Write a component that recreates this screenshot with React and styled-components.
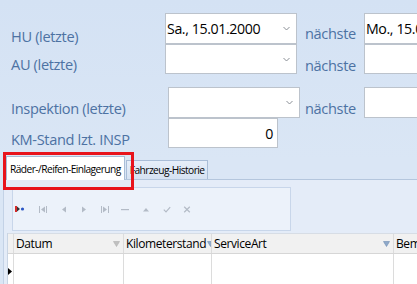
import React from 'react';
import styled, { createGlobalStyle } from 'styled-components';

const Global = createGlobalStyle`
  html, body { margin: 0; padding: 0; background: #d7e4f4; overflow: hidden; }
  #root { width: 417px; height: 284px; }
`;

const FONT = `"Open Sans", "Noto Sans", sans-serif`;

const Page = styled.div`
  position: relative;
  width: 417px;
  height: 284px;
  overflow: hidden;
  background: linear-gradient(#d4e2f4, #dae6f5 160px);
  font-family: ${FONT};
  display: flex;
  flex-direction: column;
`;

const Form = styled.div`
  flex-shrink: 0;
  padding: 13px 0 0 11px;
  display: flex;
  flex-direction: column;
`;

const FormRow = styled.div`
  display: grid;
  grid-template-columns: 154px 140px 59px 140px;
  height: ${(p) => p.$h}px;
  margin-top: ${(p) => p.$mt || 0}px;
`;

const Label = styled.div`
  font-size: 14.6px;
  line-height: 18px;
  letter-spacing: -0.35px;
  color: #4d72a3;
  padding-top: ${(p) => p.$pt}px;
  white-space: nowrap;
`;

const Field = styled.div`
  box-sizing: border-box;
  width: ${(p) => p.$w || 132}px;
  height: ${(p) => p.$h}px;
  margin-left: ${(p) => p.$ml || 0}px;
  background: #fff;
  border: 1px solid #bcc3cc;
  display: flex;
  align-items: center;
  justify-content: ${(p) => (p.$right ? 'flex-end' : 'space-between')};
  padding: 0 ${(p) => (p.$right ? 4 : 6)}px 0 1px;
  font-size: 14.2px;
  letter-spacing: -0.4px;
  color: #000;
  white-space: nowrap;
  overflow: hidden;
`;

const Chevron = () => (
  <svg width="7" height="5" viewBox="0 0 7 5">
    <path d="M0.5 1 L3.5 4 L6.5 1" fill="none" stroke="#8a8f96" strokeWidth="1" />
  </svg>
);

const TabStrip = styled.div`
  flex-shrink: 0;
  display: flex;
  align-items: flex-end;
  height: 31px;
  padding-left: 6px;
  position: relative;
  z-index: 1;
`;

const Tab = styled.div`
  box-sizing: border-box;
  height: ${(p) => (p.$active ? 24 : 19)}px;
  margin-bottom: ${(p) => (p.$active ? -1 : 0)}px;
  padding: 0 3px;
  background: ${(p) => (p.$active ? '#ffffff' : 'linear-gradient(#e6eef9, #d6e2f2)')};
  border: 1px solid #a9bdd7;
  border-bottom: none;
  margin-left: ${(p) => (p.$active ? 0 : 1)}px;
  display: flex;
  align-items: center;
  font-size: 10.2px;
  letter-spacing: -0.55px;
  color: #000;
  white-space: nowrap;
`;

const Content = styled.div`
  flex: 1;
  min-height: 0;
  overflow: hidden;
  margin-left: 3px;
  background: #e4ecf8;
  border-top: 1px solid #b4c6dd;
  border-left: 1px solid #c3d2e6;
  padding: 7px 0 0 8px;
  display: flex;
  flex-direction: column;
`;

const NavBox = styled.div`
  flex-shrink: 0;
  box-sizing: border-box;
  width: 279px;
  height: 44px;
  border: 1px solid #c8d6ea;
  background: #ecf2fa;
  display: flex;
  align-items: center;
`;

const NavBtn = styled.div`
  width: ${(p) => p.$w || 20.6}px;
  margin-right: ${(p) => p.$mr || 0}px;
  display: flex;
  justify-content: center;
  align-items: center;
  height: 12px;
`;

const Grid = styled.div`
  flex-shrink: 0;
  margin-top: 2px;
  margin-left: -5px;
  background: #fff;
  border-left: 1px solid #c9d5e4;
  display: flex;
  flex-direction: column;
`;

const GridRow = styled.div`
  display: grid;
  grid-template-columns: 6px 110px 88px 182px 100px;
  height: ${(p) => p.$h}px;
  background: ${(p) => (p.$header ? '#f1f1f1' : '#ffffff')};
  border-top: ${(p) => (p.$header ? '1px solid #d7dde5' : 'none')};
  border-bottom: ${(p) => (p.$header ? '1px solid #d6d6d6' : 'none')};
`;

const Cell = styled.div`
  border-right: 1px solid #dcdcdc;
  display: flex;
  align-items: center;
  justify-content: space-between;
  gap: 1px;
  padding: 0 ${(p) => (p.$pad ? 3 : 0)}px 0 ${(p) => (p.$pad ? 2 : 0)}px;
  font-size: 12px;
  letter-spacing: -0.4px;
  color: #000;
  white-space: nowrap;
  overflow: hidden;
`;

const Annotation = styled.div`
  position: absolute;
  left: 3px;
  top: 152px;
  width: 131px;
  height: 38px;
  box-sizing: border-box;
  border: 3px solid #e8141c;
  pointer-events: none;
  z-index: 5;
`;

const G = '#b3bbc6';

const icons = [
  <svg width="10" height="8" viewBox="0 0 10 8" key="a">
    <rect x="0" y="1" width="2" height="6" fill="#d42a2a" />
    <path d="M2 1.5 L5 4 L2 6.5 Z" fill="#333" />
    <circle cx="7.5" cy="4" r="1.6" fill="#2a55c4" />
  </svg>,
  <svg width="8" height="7" viewBox="0 0 8 7" key="b">
    <rect x="0" y="0" width="1" height="7" fill={G} />
    <path d="M6 0.5 L2 3.5 L6 6.5 Z" fill={G} />
    <rect x="7" y="0" width="1" height="7" fill={G} />
  </svg>,
  <svg width="6" height="7" viewBox="0 0 6 7" key="c">
    <path d="M5 0.5 L1 3.5 L5 6.5 Z" fill={G} />
  </svg>,
  <svg width="6" height="7" viewBox="0 0 6 7" key="d">
    <path d="M1 0.5 L5 3.5 L1 6.5 Z" fill={G} />
  </svg>,
  <svg width="8" height="7" viewBox="0 0 8 7" key="e">
    <rect x="0" y="0" width="1" height="7" fill={G} />
    <path d="M2 0.5 L6 3.5 L2 6.5 Z" fill={G} />
    <rect x="7" y="0" width="1" height="7" fill={G} />
  </svg>,
  <svg width="8" height="7" viewBox="0 0 8 7" key="f">
    <rect x="0" y="3" width="8" height="1.2" fill={G} />
  </svg>,
  <svg width="8" height="7" viewBox="0 0 8 7" key="g">
    <path d="M1 5.5 L4 2 L7 5.5 Z" fill={G} />
  </svg>,
  <svg width="8" height="7" viewBox="0 0 8 7" key="h">
    <path d="M0.8 3.6 L3 5.8 L7.2 1.2" fill="none" stroke={G} strokeWidth="1.2" />
  </svg>,
  <svg width="8" height="7" viewBox="0 0 8 7" key="i">
    <path d="M1.2 0.8 L6.8 6.2 M6.8 0.8 L1.2 6.2" fill="none" stroke={G} strokeWidth="1.2" />
  </svg>,
];

const Filter = ({ c }) => (
  <svg width="7" height="6" viewBox="0 0 7 6" style={{ flexShrink: 0 }}>
    <path d="M0.5 0.5 L6.5 0.5 L3.5 5.5 Z" fill={c} stroke={c === '#c0c0c0' ? '#b0b0b0' : '#6e8db4'} strokeWidth="0.6" />
  </svg>
);

const RowArrow = () => (
  <svg width="4" height="7" viewBox="0 0 4 7">
    <path d="M0 0 L4 3.5 L0 7 Z" fill="#000" />
  </svg>
);

export default function App() {
  return (
    <Page>
      <Global />
      <Form>
        <FormRow $h={31}>
          <Label $pt={14}>HU (letzte)</Label>
          <Field $h={31}>
            <span>Sa., 15.01.2000</span>
            <Chevron />
          </Field>
          <Label $pt={11}>nächste</Label>
          <Field $h={31} $w={140}>
            <span>Mo., 15.01.2001</span>
          </Field>
        </FormRow>
        <FormRow $h={30}>
          <Label $pt={11}>AU (letzte)</Label>
          <Field $h={30}>
            <span />
            <Chevron />
          </Field>
          <Label $pt={12}>nächste</Label>
          <Field $h={30} $w={140} />
        </FormRow>
        <FormRow $h={31} $mt={13}>
          <Label $pt={12}>Inspektion (letzte)</Label>
          <Field $h={31} $ml={3}>
            <span />
            <Chevron />
          </Field>
          <Label $pt={12}>nächste</Label>
          <Field $h={31} $w={140} />
        </FormRow>
        <FormRow $h={30}>
          <Label $pt={12}>KM-Stand lzt. INSP</Label>
          <Field $h={30} $ml={3} $w={110} $right>
            <span>0</span>
          </Field>
        </FormRow>
      </Form>

      <TabStrip>
        <Tab $active>Räder-/Reifen-Einlagerung</Tab>
        <Tab>Fahrzeug-Historie</Tab>
      </TabStrip>

      <Content>
        <NavBox>
          {icons.map((ic, i) => (
            <NavBtn key={i} $w={i === 0 ? 14 : 20.6} $mr={i === 0 ? 5.7 : 0}>
              {ic}
            </NavBtn>
          ))}
        </NavBox>
        <Grid>
          <GridRow $header $h={19}>
            <Cell />
            <Cell $pad>
              <span>Datum</span>
              <Filter c="#c0c0c0" />
            </Cell>
            <Cell $pad>
              <span>Kilometerstand</span>
              <Filter c="#8fa9c9" />
            </Cell>
            <Cell $pad>
              <span>ServiceArt</span>
              <Filter c="#8fa9c9" />
            </Cell>
            <Cell $pad>
              <span>Bemerkung</span>
            </Cell>
          </GridRow>
          <GridRow $h={34}>
            <Cell>
              <RowArrow />
            </Cell>
            <Cell />
            <Cell />
            <Cell />
            <Cell />
          </GridRow>
        </Grid>
      </Content>
      <Annotation />
    </Page>
  );
}
